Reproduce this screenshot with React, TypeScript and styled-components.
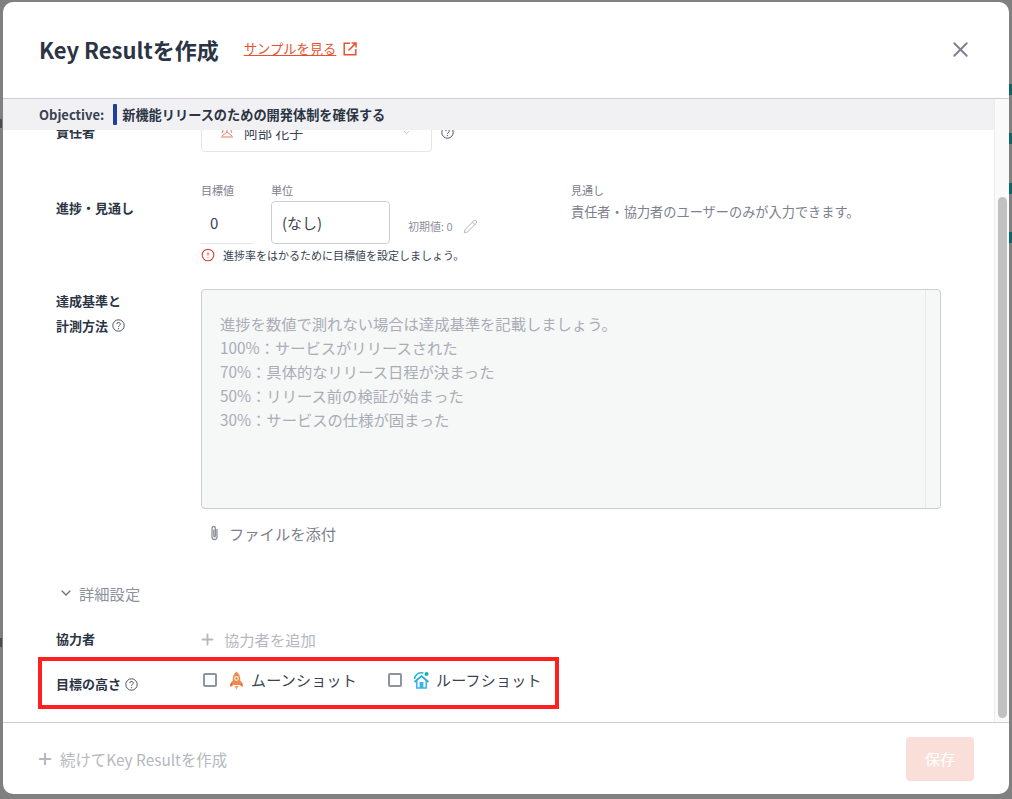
import React from 'react'
import styled, { createGlobalStyle } from 'styled-components'
import { X, Plus, ChevronDown, Pencil, AlertCircle } from 'lucide-react'

const GlobalStyle = createGlobalStyle`
  html, body {
    margin: 0;
    padding: 0;
    background: #808080;
  }
  body {
    font-family: 'Noto Sans CJK JP', 'Noto Sans', sans-serif;
    color: #2b3445;
  }
  * {
    box-sizing: border-box;
  }
`

const HELP_TEXT = [
  '進捗を数値で測れない場合は達成基準を記載しましょう。',
  '100%：サービスがリリースされた',
  '70%：具体的なリリース日程が決まった',
  '50%：リリース前の検証が始まった',
  '30%：サービスの仕様が固まった'
]

const BACKDROP_MARKS = [84, 133, 183, 232]
const BACKDROP_GLYPHS = [119, 638]

const HelpIcon = () => (
  <svg width="13" height="13" viewBox="0 0 13 13" fill="none">
    <circle cx="6.5" cy="6.5" r="5.7" stroke="#4a5160" strokeWidth="1" />
    <path d="M4.8 5.1a1.7 1.7 0 1 1 2.5 1.5c-.5.3-.8.6-.8 1.2" stroke="#4a5160" strokeWidth="1" />
    <circle cx="6.5" cy="9.6" r=".7" fill="#4a5160" />
  </svg>
)

const OpenIcon = () => (
  <svg width="14" height="14" viewBox="0 0 14 14" fill="none" stroke="#e8512f" strokeWidth="1.5">
    <path d="M7 1.2H1.2v11.6h11.6V7" />
    <path d="M5.5 8.5L12.6 1.4M8.5 1h4.5v4.5" />
  </svg>
)

const ClipIcon = () => (
  <svg width="11" height="16" viewBox="0 0 11 16" fill="none" stroke="#8d919c" strokeWidth="1.3">
    <path d="M8 4v8a2.5 2.5 0 0 1-5 0V3.2a1.7 1.7 0 0 1 3.4 0V11a.8.8 0 0 1-1.6 0V4.5" />
  </svg>
)

const RocketIcon = () => (
  <svg width="17" height="19" viewBox="-1.5 0 17 19">
    <path d="M7 0.5C10 3 10.8 6 10.8 9v5H3.2V9C3.2 6 4 3 7 0.5Z" fill="#f08a4b" />
    <path d="M3.2 9.5L.8 13v3l2.4-1.5ZM10.8 9.5l2.4 3.5v3l-2.4-1.5Z" fill="#e8662c" />
    <circle cx="7" cy="7.5" r="2.4" fill="#fde6d6" />
    <circle cx="7" cy="7.5" r="1" fill="#e8662c" />
    <path d="M4.8 15h4.4L7 18.6Z" fill="#f5a26f" />
  </svg>
)

const RoofIcon = () => (
  <svg width="17" height="18" viewBox="0 0 17 18" fill="none">
    <path d="M1.5 8C2 3.5 6 1 10.5 2" stroke="#1fc0cf" strokeWidth="1.6" />
    <circle cx="13.5" cy="3" r="2" fill="#14b5b5" />
    <path d="M1.5 11L8.5 5.2 15.5 11" stroke="#2aa6e0" strokeWidth="1.7" />
    <path d="M3.8 10v7h9.4v-7" stroke="#35b4e8" strokeWidth="1.5" />
    <rect x="6.6" y="11" width="3.8" height="6" fill="#35b4e8" />
  </svg>
)

const AvatarIcon = () => (
  <svg width="14" height="14" viewBox="0 0 14 14" fill="none" stroke="#e07a6a" strokeWidth="1">
    <path d="M7 1v6M7 7L2 11M7 7l5 4M4 3L2 8M10 3l2 5M1 12h12" />
  </svg>
)

const App: React.FC = () => {
  return (
    <Page>
      <GlobalStyle />
      {BACKDROP_MARKS.map((y) => (
        <BackdropMark key={y} style={{ top: y }} />
      ))}
      {BACKDROP_GLYPHS.map((y) => (
        <BackdropGlyph key={y} style={{ top: y }} />
      ))}
      <Modal>
        <Header>
          <Title>Key Resultを作成</Title>
          <SampleLink>
            <SampleText>サンプルを見る</SampleText>
            <OpenIcon />
          </SampleLink>
          <CloseButton>
            <X size={25} strokeWidth={1.8} />
          </CloseButton>
        </Header>

        <Body>
          <Main>
            <ObjectiveBar>
              <ObjectiveLabel>Objective:</ObjectiveLabel>
              <ObjectiveMark />
              <ObjectiveName>新機能リリースのための開発体制を確保する</ObjectiveName>
            </ObjectiveBar>
            <Clip>
              <Content>
                <AssigneeRow>
                  <RowLabel>責任者</RowLabel>
                  <AssigneeSelect>
                    <AvatarIcon />
                    <AssigneeName>阿部 花子</AssigneeName>
                    <ChevronDown size={9} color="#a9adb6" />
                  </AssigneeSelect>
                  <HelpIcon />
                </AssigneeRow>

                <ProgressRow>
                  <ProgressLabel>進捗・見通し</ProgressLabel>
                  <ProgressFields>
                    <FieldLine>
                      <TargetField>
                        <SmallCaption>目標値</SmallCaption>
                        <TargetValue>0</TargetValue>
                      </TargetField>
                      <UnitField>
                        <SmallCaption>単位</SmallCaption>
                        <UnitBox>(なし)</UnitBox>
                      </UnitField>
                      <InitialValue>
                        初期値: 0
                        <Pencil size={15} strokeWidth={1.2} color="#9a9ea8" />
                      </InitialValue>
                    </FieldLine>
                    <Warning>
                      <AlertCircle size={14} strokeWidth={1.8} color="#e0342f" />
                      進捗率をはかるために目標値を設定しましょう。
                    </Warning>
                  </ProgressFields>
                  <Outlook>
                    <SmallCaption>見通し</SmallCaption>
                    <OutlookText>責任者・協力者のユーザーのみが入力できます。</OutlookText>
                  </Outlook>
                </ProgressRow>

                <CriteriaRow>
                  <CriteriaLabel>
                    <div>達成基準と</div>
                    <CriteriaLabelLine>
                      計測方法
                      <HelpIcon />
                    </CriteriaLabelLine>
                  </CriteriaLabel>
                  <TextArea>
                    <TextAreaBody>
                      {HELP_TEXT.map((line) => (
                        <div key={line}>{line}</div>
                      ))}
                    </TextAreaBody>
                    <TextAreaScroll />
                  </TextArea>
                </CriteriaRow>

                <AttachRow>
                  <ClipIcon />
                  ファイルを添付
                </AttachRow>

                <DetailToggle>
                  <ChevronDown size={16} strokeWidth={2} color="#6e7380" />
                  詳細設定
                </DetailToggle>

                <MemberRow>
                  <RowLabel>協力者</RowLabel>
                  <AddMember>
                    <Plus size={17} strokeWidth={2.6} color="#b5b8c0" />
                    協力者を追加
                  </AddMember>
                </MemberRow>

                <Highlight>
                  <HighlightLabel>
                    目標の高さ
                    <HelpIcon />
                  </HighlightLabel>
                  <ShotOption>
                    <CheckBox />
                    <RocketIcon />
                    <ShotName>ムーンショット</ShotName>
                  </ShotOption>
                  <ShotOption $second>
                    <CheckBox />
                    <RoofIcon />
                    <ShotName>ルーフショット</ShotName>
                  </ShotOption>
                </Highlight>
              </Content>
            </Clip>
          </Main>
          <ScrollTrack>
            <ScrollThumb />
          </ScrollTrack>
        </Body>

        <Footer>
          <ContinueToggle>
            <Plus size={18} strokeWidth={2.8} color="#b5b8c0" />
            続けてKey Resultを作成
          </ContinueToggle>
          <SaveButton>保存</SaveButton>
        </Footer>
      </Modal>
    </Page>
  )
}

const Page = styled.div`
  position: relative;
  width: 1012px;
  height: 799px;
  padding: 2px 3px 5px 3px;
  overflow: hidden;
  background: #808080;
`

const BackdropMark = styled.div`
  position: absolute;
  right: 0;
  width: 3px;
  height: 11px;
  background: #0f6466;
`

const BackdropGlyph = styled.div`
  position: absolute;
  left: 0;
  width: 2px;
  height: 9px;
  background: #4d4d4d;
`

const Modal = styled.div`
  position: relative;
  display: flex;
  flex-direction: column;
  height: 100%;
  background: #fff;
  border-radius: 10px;
  overflow: hidden;
`

const Header = styled.div`
  display: flex;
  align-items: center;
  height: 97px;
  padding: 0 38px 0 36px;
  border-bottom: 1px solid #cdcdd6;
  flex-shrink: 0;
`

const Title = styled.h1`
  margin: 0 0 2px;
  font-size: 22px;
  font-weight: 700;
  line-height: 30px;
  color: #2b3445;
`

const SampleLink = styled.div`
  display: flex;
  align-items: center;
  gap: 7px;
  margin-left: 25px;
  margin-bottom: 3px;
  color: #e8512f;
`

const SampleText = styled.span`
  font-size: 13.3px;
  line-height: 18px;
  text-decoration: underline;
`

const CloseButton = styled.div`
  display: flex;
  margin-left: auto;
  margin-right: -2px;
  margin-bottom: 2px;
  color: #7c808c;
`

const Body = styled.div`
  display: flex;
  flex: 1;
  min-height: 0;
`

const Main = styled.div`
  display: flex;
  flex-direction: column;
  flex: 1;
  min-width: 0;
`

const ObjectiveBar = styled.div`
  display: flex;
  align-items: center;
  flex-shrink: 0;
  height: 31px;
  padding-left: 36px;
  background: #f1f1f3;
`

const ObjectiveLabel = styled.span`
  font-size: 13px;
  font-weight: 700;
  color: #3a4252;
`

const ObjectiveMark = styled.span`
  width: 4px;
  height: 21px;
  margin: 0 5px 0 9px;
  border-radius: 1px;
  background: #1e3f9e;
`

const ObjectiveName = styled.span`
  font-size: 13.2px;
  font-weight: 700;
  color: #2b3445;
`

const Clip = styled.div`
  flex: 1;
  min-height: 0;
  overflow: hidden;
`

const Content = styled.div`
  display: flex;
  flex-direction: column;
  margin-top: -18px;
`

const RowLabel = styled.div`
  width: 145px;
  flex-shrink: 0;
  font-size: 13px;
  font-weight: 700;
  line-height: 20px;
  color: #2b3445;
`

const AssigneeRow = styled.div`
  display: flex;
  align-items: center;
  height: 40px;
  padding-left: 53px;
`

const AssigneeSelect = styled.div`
  display: flex;
  align-items: center;
  width: 231px;
  height: 40px;
  margin-right: 9px;
  padding: 0 20px 0 18px;
  border: 1px solid #e4e4ea;
  border-radius: 4px;
`

const AssigneeName = styled.span`
  flex: 1;
  margin-left: 10px;
  font-size: 14px;
  color: #3a4252;
`

const ProgressRow = styled.div`
  display: flex;
  height: 109px;
  margin-top: 28px;
  padding-left: 53px;
`

const ProgressLabel = styled(RowLabel)`
  padding-top: 18px;
`

const ProgressFields = styled.div`
  display: flex;
  flex-direction: column;
  width: 370px;
`

const FieldLine = styled.div`
  display: flex;
  align-items: flex-end;
`

const TargetField = styled.div`
  display: flex;
  flex-direction: column;
  width: 52px;
  margin-right: 18px;
`

const SmallCaption = styled.div`
  height: 21px;
  font-size: 11px;
  line-height: 20px;
  color: #7c808c;
`

const TargetValue = styled.div`
  height: 43px;
  padding-left: 9px;
  border-bottom: 1px solid #e4e4ea;
  font-size: 15px;
  line-height: 43px;
  color: #3a4252;
`

const UnitField = styled.div`
  display: flex;
  flex-direction: column;
  width: 119px;
`

const UnitBox = styled.div`
  height: 43px;
  padding-left: 10px;
  border: 1px solid #cdcdd6;
  border-radius: 4px;
  font-size: 15px;
  line-height: 41px;
  color: #3a4252;
`

const InitialValue = styled.div`
  display: flex;
  align-items: center;
  gap: 10px;
  height: 22px;
  margin: 0 0 7px 18px;
  font-size: 11px;
  color: #8d919c;
`

const Warning = styled.div`
  display: flex;
  align-items: center;
  gap: 8px;
  height: 22px;
  font-size: 11px;
  color: #3a4252;
`

const Outlook = styled.div`
  display: flex;
  flex-direction: column;
`

const OutlookText = styled.div`
  font-size: 13.2px;
  line-height: 22px;
  color: #7c808c;
`

const CriteriaRow = styled.div`
  display: flex;
  padding-left: 53px;
`

const CriteriaLabel = styled(RowLabel)`
  margin-top: -1px;
  line-height: 25px;
`

const CriteriaLabelLine = styled.div`
  display: flex;
  align-items: center;
  gap: 4px;
`

const TextArea = styled.div`
  display: flex;
  width: 740px;
  height: 220px;
  border: 1px solid #cdcdd6;
  border-radius: 4px;
  background: #f6f7f7;
`

const TextAreaBody = styled.div`
  flex: 1;
  padding: 21px 18px;
  font-size: 15.3px;
  line-height: 24px;
  color: #a9adb6;
`

const TextAreaScroll = styled.div`
  width: 15px;
  border-left: 1px solid #e8e8ec;
`

const AttachRow = styled.div`
  display: flex;
  align-items: center;
  gap: 9px;
  height: 24px;
  margin: 12px 0 0 206px;
  font-size: 15.3px;
  color: #7c808c;
`

const DetailToggle = styled.div`
  display: flex;
  align-items: center;
  gap: 5px;
  height: 24px;
  margin: 36px 0 0 55px;
  font-size: 15.3px;
  color: #8d919c;
`

const MemberRow = styled.div`
  display: flex;
  align-items: center;
  height: 24px;
  margin-top: 22px;
  padding-left: 53px;
`

const AddMember = styled.div`
  display: flex;
  align-items: center;
  gap: 8px;
  margin-left: -2px;
  font-size: 15.3px;
  color: #b5b8c0;
`

const Highlight = styled.div`
  display: flex;
  align-items: flex-start;
  width: 521px;
  height: 52px;
  margin: 6px 0 0 35px;
  padding: 8px 0 0 14px;
  border: 4px solid #ff2020;
`

const HighlightLabel = styled(RowLabel)`
  display: flex;
  align-items: center;
  gap: 4px;
  padding-top: 5px;
`

const ShotOption = styled.div<{ $second?: boolean }>`
  display: flex;
  align-items: center;
  margin-left: ${(p) => (p.$second ? '31px' : '2px')};
`

const CheckBox = styled.span`
  width: 14px;
  height: 14px;
  margin-right: 11px;
  border: 2px solid #8f959e;
  border-radius: 2px;
`

const ShotName = styled.span`
  margin-left: 6px;
  font-size: 15px;
  letter-spacing: 0.25px;
  line-height: 22px;
  color: #3a4252;
`

const ScrollTrack = styled.div`
  width: 15px;
  flex-shrink: 0;
  padding: 98px 2px 4px 3px;
  border-left: 1px solid #ececef;
  background: #fafafa;
`

const ScrollThumb = styled.div`
  height: 100%;
  border-radius: 5px;
  background: #c1c1c1;
`

const Footer = styled.div`
  display: flex;
  align-items: center;
  justify-content: space-between;
  height: 72px;
  padding: 0 35px 0 33px;
  border-top: 1px solid #cdcdd6;
  flex-shrink: 0;
`

const ContinueToggle = styled.div`
  display: flex;
  align-items: center;
  gap: 6px;
  font-size: 15.4px;
  color: #b5b8c0;
`

const SaveButton = styled.div`
  width: 68px;
  height: 44px;
  border-radius: 4px;
  background: #fadfd8;
  color: #fff;
  font-size: 15px;
  line-height: 44px;
  text-align: center;
`

export default App
